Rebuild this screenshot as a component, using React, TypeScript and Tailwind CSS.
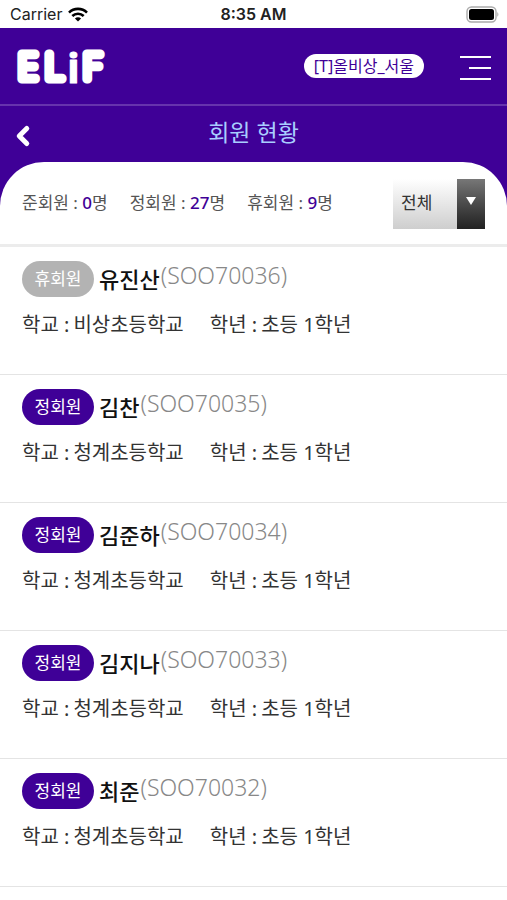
import { useState } from 'react';
import { ChevronLeft } from 'lucide-react';

type Member = {
  name: string;
  code: string;
  status: '정회원' | '준회원' | '휴회원';
  school: string;
  grade: string;
};

const members: Member[] = [
  { name: '유진산', code: 'SOO70036', status: '휴회원', school: '비상초등학교', grade: '초등 1학년' },
  { name: '김찬', code: 'SOO70035', status: '정회원', school: '청계초등학교', grade: '초등 1학년' },
  { name: '김준하', code: 'SOO70034', status: '정회원', school: '청계초등학교', grade: '초등 1학년' },
  { name: '김지나', code: 'SOO70033', status: '정회원', school: '청계초등학교', grade: '초등 1학년' },
  { name: '최준', code: 'SOO70032', status: '정회원', school: '청계초등학교', grade: '초등 1학년' },
];

const counts = [
  { label: '준회원', value: 0 },
  { label: '정회원', value: 27 },
  { label: '휴회원', value: 9 },
];

const StatusBar = () => (
  <div className="grid h-7 grid-cols-3 items-center bg-white px-2 font-['Inter','Liberation_Sans',sans-serif] text-base text-[#222]">
    <div className="flex items-center gap-1.5 pl-0.5">
      <span>Carrier</span>
      <svg viewBox="0 0 20 15" className="h-[15px] w-5" fill="none" stroke="#000" strokeWidth="2.6">
        <path d="M1 5.6a12.8 12.8 0 0 1 18 0" />
        <path d="M4.3 9a8.2 8.2 0 0 1 11.4 0" />
        <path d="M10 14.6 6.9 11.5a4.4 4.4 0 0 1 6.2 0z" fill="#000" stroke="none" />
      </svg>
    </div>
    <span className="text-center font-semibold">8:35 AM</span>
    <svg viewBox="0 0 34 17" className="h-[17px] w-[34px] justify-self-end">
      <rect x="2" y="1" width="29" height="15" rx="4.5" fill="#fff" stroke="#aaa" strokeWidth="1.4" />
      <rect x="4" y="3" width="25" height="11" rx="2.5" fill="#000" />
      <path d="M32.3 6.3c1.4.5 1.4 3.9 0 4.4z" fill="#aaa" />
    </svg>
  </div>
);

const Logo = () => (
  <svg viewBox="0 0 104 64" className="h-16 w-[104px]" role="img" aria-label="ELiF">
    <g fill="#fff" stroke="#fff" strokeLinejoin="round" strokeLinecap="round">
      <g fontFamily="Inter, sans-serif" fontSize="34" fontWeight="100" strokeWidth="9">
        <text x="6" y="45">E</text>
        <text x="33" y="45">L</text>
        <text x="71" y="45">F</text>
      </g>
      <text x="55" y="49" fontFamily="Open Sans, sans-serif" fontSize="42" fontWeight="700" strokeWidth="1">
        i
      </text>
    </g>
  </svg>
);

const Header = () => (
  <header className="bg-[#3f0097]">
    <div className="flex h-[78px] items-center border-b-2 border-[#6633ad] pl-3 pr-4">
      <a href="#home" className="mr-auto">
        <Logo />
      </a>
      <span className="mr-9 flex h-6 items-center rounded-full bg-white px-2.5 text-base text-[#3f0097]">
        [T]올비상_서울
      </span>
      <button type="button" aria-label="메뉴" className="mt-1 flex w-[31px] flex-col items-end gap-[9px]">
        <span className="h-0.5 w-full bg-white" />
        <span className="h-0.5 w-[22px] bg-white" />
        <span className="h-0.5 w-full bg-white" />
      </button>
    </div>
    <div className="grid h-14 grid-cols-[1fr_auto_1fr] items-center px-2">
      <button type="button" aria-label="뒤로" className="mt-1 w-8">
        <ChevronLeft className="h-[30px] w-[30px] text-white" strokeWidth={4} />
      </button>
      <h1 className="pb-1 text-[23px] leading-8 text-[#a9cdff]">회원 현황</h1>
    </div>
  </header>
);

const Summary = () => {
  const [filter, setFilter] = useState('전체');

  return (
    <div className="bg-linear-to-b from-[#3f0097] from-60% to-white to-60%">
      <div className="flex h-[85px] items-center rounded-t-[44px] border-b-[3px] border-[#ececec] bg-white px-[22px]">
        <ul className="mr-auto flex gap-[22px] text-[17px] text-[#555]">
          {counts.map((item) => (
            <li key={item.label}>
              {item.label} : <b className="font-medium text-[#3f0097]">{item.value}</b>명
            </li>
          ))}
        </ul>
        <div className="relative mt-0.5 flex h-[50px] w-[92px]">
          <select
            aria-label="회원 구분"
            value={filter}
            onChange={(e) => setFilter(e.target.value)}
            className="w-full appearance-none bg-linear-to-b from-white to-[#cecece] pb-0.5 pl-2 text-[17px] text-[#333] outline-none"
          >
            <option>전체</option>
            <option>준회원</option>
            <option>정회원</option>
            <option>휴회원</option>
          </select>
          <span className="pointer-events-none absolute inset-y-0 right-0 flex w-7 items-center justify-center bg-linear-to-b from-[#777] to-[#222]">
            <svg viewBox="0 0 10 8" className="mb-1.5 h-2 w-2.5" fill="#fff">
              <path d="M0 0h10L5 8z" />
            </svg>
          </span>
        </div>
      </div>
    </div>
  );
};

const MemberRow = ({ member }: { member: Member }) => (
  <li className="h-32 border-b border-[#e4e4e4] px-[22px] pt-[14px]">
    <div className="flex h-9 items-center">
      <span
        className={`mr-[5px] flex h-9 w-[72px] items-center justify-center rounded-full text-[17px] text-white ${
          member.status === '휴회원' ? 'bg-[#b3b3b3]' : 'bg-[#3f0097]'
        }`}
      >
        {member.status}
      </span>
      <strong className="mr-px text-[22px] font-medium text-[#111]">{member.name}</strong>
      <span className="pb-2 text-[23px] font-light text-[#888]">({member.code})</span>
    </div>
    <dl className="mt-3 flex text-[20px] leading-8 text-[#333]">
      <dt className="mr-1">학교 :</dt>
      <dd className="mr-[26px]">{member.school}</dd>
      <dt className="mr-1">학년 :</dt>
      <dd>{member.grade}</dd>
    </dl>
  </li>
);

const App = () => (
  <div className="min-h-screen bg-white font-['Noto_Sans','Noto_Sans_CJK_KR',sans-serif]">
    <StatusBar />
    <Header />
    <Summary />
    <ul>
      {members.map((member) => (
        <MemberRow key={member.code} member={member} />
      ))}
    </ul>
  </div>
);

export default App;
